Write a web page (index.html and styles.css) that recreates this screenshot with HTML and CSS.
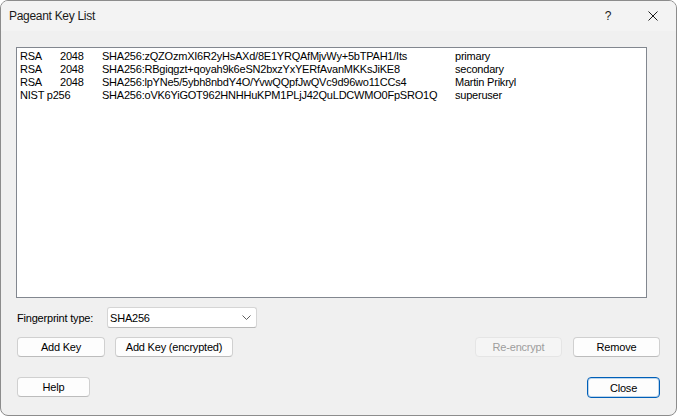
FILE: index.html
```html
<!DOCTYPE html>
<html>
<head>
<meta charset="utf-8">
<title>Pageant Key List</title>
<link rel="stylesheet" href="styles.css">
</head>
<body>
<div class="window">
  <div class="titlebar">
    <div class="title">Pageant Key List</div>
    <div class="caption-btn help-cap">?</div>
    <div class="caption-btn close-cap">
      <svg width="10" height="10" viewBox="0 0 10 10"><path d="M0.5 0.5 L9.5 9.5 M9.5 0.5 L0.5 9.5" stroke="#1b1b1b" stroke-width="1" fill="none"/></svg>
    </div>
  </div>
  <div class="content">
    <div class="keylist">
      <div class="row"><span>RSA</span><span>2048</span><span>SHA256:zQZOzmXI6R2yHsAXd/8E1YRQAfMjvWy+5bTPAH1/Its</span><span>primary</span></div>
      <div class="row"><span>RSA</span><span>2048</span><span>SHA256:RBgiqgzt+qoyah9k6eSN2bxzYxYERfAvanMKKsJiKE8</span><span>secondary</span></div>
      <div class="row"><span>RSA</span><span>2048</span><span>SHA256:lpYNe5/5ybh8nbdY4O/YvwQQpfJwQVc9d96wo11CCs4</span><span>Martin Prikryl</span></div>
      <div class="row"><span class="span2">NIST p256</span><span>SHA256:oVK6YiGOT962HNHHuKPM1PLjJ42QuLDCWMO0FpSRO1Q</span><span>superuser</span></div>
    </div>
    <div class="fp-row">
      <span class="label">Fingerprint type:</span>
      <div class="combo">
        <span>SHA256</span>
        <svg class="chev" width="9" height="5" viewBox="0 0 9 5"><path d="M0.5 0.5 L4.5 4.5 L8.5 0.5" stroke="#5f5f5f" stroke-width="1" fill="none"/></svg>
      </div>
    </div>
    <div class="btn-row">
      <button class="btn w88">Add Key</button>
      <button class="btn w118">Add Key (encrypted)</button>
      <div class="grow"></div>
      <button class="btn w87" disabled>Re-encrypt</button>
      <button class="btn w87">Remove</button>
    </div>
    <div class="footer">
      <button class="btn w73">Help</button>
      <div class="grow"></div>
      <button class="btn w73 default">Close</button>
    </div>
  </div>
</div>
</body>
</html>
```

FILE: styles.css
```css
html, body {
  margin: 0;
  padding: 0;
  background: #ffffff;
}

.window {
  width: 677px;
  height: 416px;
  box-sizing: border-box;
  border: 1px solid #8c8c8c;
  border-radius: 8px;
  overflow: hidden;
  background: #f0f0f0;
  display: flex;
  flex-direction: column;
  font-family: "Liberation Sans", Arial, sans-serif;
  color: #000;
}

.titlebar {
  height: 30px;
  background: #f3f3f3;
  display: flex;
  align-items: center;
}

.title {
  flex: 1;
  padding-left: 8px;
  font-size: 12px;
  letter-spacing: -0.3px;
  color: #1a1a1a;
}

.caption-btn {
  width: 46px;
  height: 30px;
  display: flex;
  align-items: center;
  justify-content: center;
  font-size: 12px;
  color: #1a1a1a;
}

.help-cap {
  padding-left: 2px;
  box-sizing: border-box;
}

.content {
  flex: 1;
  padding: 16px 16px 0 15px;
  display: flex;
  flex-direction: column;
}

.keylist {
  height: 251px;
  box-sizing: border-box;
  margin-right: 13px;
  border: 1px solid #82878f;
  background: #fff;
  padding: 2px 0 0 3px;
  font-size: 11px;
  letter-spacing: -0.22px;
}

.row {
  display: grid;
  grid-template-columns: 40px 42px 353px auto;
  height: 13px;
  line-height: 13px;
  white-space: nowrap;
}

.row .span2 {
  grid-column: span 2;
}

.fp-row {
  margin-top: 9px;
  display: flex;
  align-items: center;
  font-size: 11px;
  letter-spacing: -0.2px;
}

.label {
  width: 90px;
  padding-left: 1px;
}

.combo {
  width: 150px;
  height: 21px;
  box-sizing: border-box;
  border: 1px solid #d5d5d5;
  border-bottom-color: #b8b8b8;
  border-radius: 3px;
  background: #fff;
  display: flex;
  align-items: center;
  justify-content: space-between;
  padding: 0 5px 0 2px;
}

.chev {
  display: block;
}

.btn-row {
  margin-top: 9px;
  padding-left: 1px;
  display: flex;
  gap: 10px;
}

.btn-row .w87:last-child {
  margin-left: 1px;
}

.footer {
  margin-top: 20px;
  padding-left: 1px;
  display: flex;
}

.grow {
  flex: 1;
}

.btn {
  height: 20px;
  box-sizing: border-box;
  border: 1px solid #d0d0d0;
  border-bottom-color: #bcbcbc;
  border-radius: 4px;
  background: #fdfdfd;
  font-family: "Liberation Sans", Arial, sans-serif;
  font-size: 11px;
  letter-spacing: -0.2px;
  color: #000;
  padding: 0;
  margin: 0;
}

.btn:disabled {
  background: #f5f5f5;
  border-color: #e5e5e5;
  color: #9d9d9d;
}

.btn.default {
  border: 1px solid #005fb8;
  box-shadow: inset 0 0 0 1px rgba(0, 95, 184, 0.25);
  height: 21px;
}

.w88 { width: 88px; }
.w118 { width: 118px; }
.w87 { width: 87px; }
.w73 { width: 73px; }
```
